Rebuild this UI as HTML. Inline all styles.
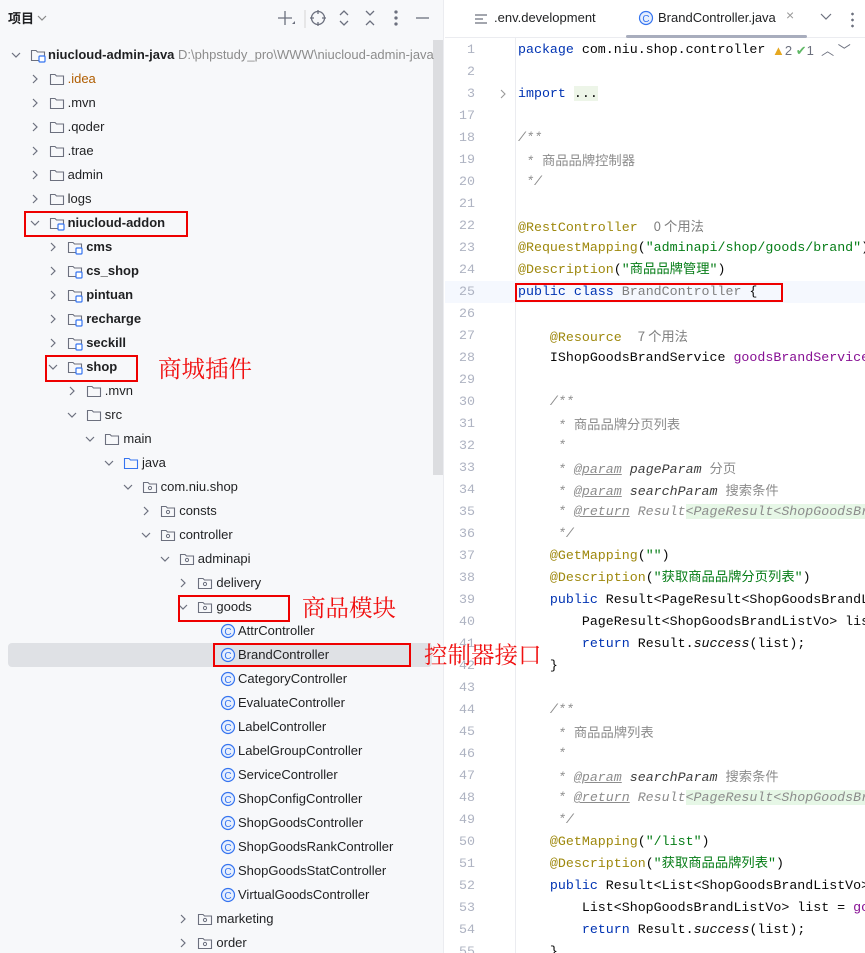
<!DOCTYPE html>
<html><head><meta charset="utf-8"><style>
*{margin:0;padding:0;box-sizing:border-box}
html,body{width:865px;height:953px;overflow:hidden}
body{background:#fff;font-family:"Liberation Sans","Noto Sans CJK SC",sans-serif;position:relative}
#tree{position:absolute;left:0;top:0;width:444px;height:953px;background:#f7f8fa;border-right:1px solid #ebecf0;overflow:hidden}
.r{position:absolute;height:24px;line-height:24px;font-size:13px;color:#1f2022;white-space:nowrap}
.ar{position:absolute;top:0;width:12px;height:24px}
.ic{position:absolute;top:4px;width:16px;height:16px}
.t{position:absolute;top:0}
.b{font-weight:bold}
.box{position:absolute;border:2.5px solid #e00;}
.ann{position:absolute;color:#f01010;font-size:23.5px;font-family:"Noto Serif CJK SC","Noto Sans CJK SC",serif;line-height:24px;z-index:10;white-space:nowrap}
#ed{position:absolute;left:445px;top:0;width:420px;height:953px;background:#fff;overflow:hidden}
.ln{position:absolute;left:0;width:30px;text-align:right;font-family:"Liberation Mono",monospace;font-size:13.3px;color:#aeb3c2}
.cd{position:absolute;left:73px;font-family:"Liberation Mono","Noto Sans CJK SC",monospace;font-size:13.3px;color:#080808;white-space:pre}
.k{color:#0033b3}.a{color:#9e880d}.s{color:#067d17}.c{color:#8c8c8c;font-style:italic}.g{color:#808080}.p{color:#871094}.tg{text-decoration:underline;color:#8c8c8c;font-style:italic}.cn{font-style:normal;font-family:"Noto Sans CJK SC",sans-serif}
</style></head><body>
<div id="tree">
<div style="position:absolute;left:8px;top:8px;font-size:13px;font-weight:bold;color:#1f2022;font-family:'Noto Sans CJK SC',sans-serif">项目</div>
<svg style="position:absolute;left:37px;top:14px" width="10" height="8"><path d="M1 2l4 4 4-4" fill="none" stroke="#888" stroke-width="1.2"/></svg>
<svg style="position:absolute;left:275px;top:8px" width="160" height="22" fill="none" stroke="#6c707e" stroke-width="1.3">
<path d="M4 3v14M-3 10h14" transform="translate(6 0)"/><path d="M17 16l3 0 0-3z" fill="#6c707e" stroke="none"/>
<line x1="30" y1="2" x2="30" y2="20" stroke="#ddd"/>
<circle cx="43" cy="10" r="6.5"/><path d="M43 2v4M43 14v4M35 10h4M47 10h4"/>
<path d="M65 7l4-4 4 4M65 13l4 4 4-4"/>
<path d="M91 3l4 4 4-4M91 17l4-4 4 4"/>
<circle cx="121" cy="4" r="1" fill="#6c707e"/><circle cx="121" cy="10" r="1" fill="#6c707e"/><circle cx="121" cy="16" r="1" fill="#6c707e"/>
<path d="M141 10h13"/>
</svg>
<div style="position:absolute;left:433px;top:40px;width:10px;height:435px;background:#dcdde0"></div>
<div style="position:absolute;left:8px;top:643px;width:424px;height:24px;background:#dfe1e5;border-radius:4px"></div>
<div id="rows"></div>
<div class="box" style="left:24px;top:211px;width:164px;height:26px"></div>
<div class="box" style="left:45px;top:355px;width:93px;height:27px"></div>
<div class="box" style="left:178px;top:595px;width:112px;height:27px"></div>
<div class="box" style="left:213px;top:643px;width:198px;height:24px"></div>
</div>

<div id="ed">
<div style="position:absolute;left:0;top:0;width:420px;height:38px;border-bottom:1px solid #ebecf0"></div>
<svg style="position:absolute;left:29px;top:12px" width="14" height="14" stroke="#6c707e" stroke-width="1.2"><path d="M1 3h12M1 7h8M1 11h12"/></svg>
<div style="position:absolute;left:49px;top:10px;font-size:13px;color:#1f2022">.env.development</div>
<svg style="position:absolute;left:193px;top:10px" width="16" height="16"><circle cx="8" cy="8" r="6.5" fill="#e7effd" stroke="#3574f0" stroke-width="1.2"/><text x="8" y="12" font-size="10" text-anchor="middle" fill="#3574f0" font-family="Liberation Sans">C</text></svg>
<div style="position:absolute;left:213px;top:10px;font-size:13px;color:#1f2022">BrandController.java</div>
<div style="position:absolute;left:341px;top:7px;font-size:14px;color:#999">×</div>
<svg style="position:absolute;left:375px;top:13px" width="12" height="8"><path d="M1 1l5 5 5-5" fill="none" stroke="#6c707e" stroke-width="1.2"/></svg>
<div style="position:absolute;left:406px;top:11px;width:3px;height:18px;background:radial-gradient(circle,#6c707e 1.2px,transparent 1.5px) 0 0/3px 6px"></div>
<div style="position:absolute;left:181px;top:35px;width:181px;height:3px;background:#a8adbd;border-radius:2px"></div>
<div style="position:absolute;left:70px;top:38px;width:1px;height:915px;background:#ebecf0"></div>
<div style="position:absolute;left:0;top:281px;width:420px;height:22px;background:#f5f8fe"></div>
<div id="code"></div>
<div style="position:absolute;left:327px;top:40px;font-size:13px;color:#6c707e;white-space:nowrap"><span style="color:#e6a820">▲</span>2 <span style="color:#5fb865">✔</span>1 &nbsp;︿ ﹀</div>
<div class="box" style="left:70px;top:283px;width:268px;height:19px"></div>
</div>

<div class="ann" style="left:158px;top:355px">商城插件</div>
<div class="ann" style="left:302px;top:594px">商品模块</div>
<div class="ann" style="left:424px;top:641px">控制器接口</div>

<script>
var folder='<path d="M1.5 3.5h4.5l1.5 1.5h7v8.5h-13z" fill="none" stroke="#6c707e" stroke-width="1.1"/>';
var mod=folder+'<rect x="9" y="9" width="6" height="6" rx="1" fill="#fff" stroke="#3574f0" stroke-width="1.2"/>';
var pkg=folder+'<circle cx="8" cy="9" r="1.6" fill="none" stroke="#6c707e" stroke-width="1"/>';
var src='<path d="M1.5 3.5h4.5l1.5 1.5h7v8.5h-13z" fill="none" stroke="#3574f0" stroke-width="1.1"/>';
var cls='<circle cx="8" cy="8" r="6.5" fill="#e7effd" stroke="#3574f0" stroke-width="1.2"/><text x="8" y="12" font-size="10" text-anchor="middle" fill="#3574f0" font-family="Liberation Sans">C</text>';
var R=[
[0,'o',mod,'niucloud-admin-java',1,' <span style="color:#8c8c8c;font-weight:normal">D:\\phpstudy_pro\\WWW\\niucloud-admin-java</span>'],
[1,'c',folder,'<span style="color:#b05d00">.idea</span>'],[1,'c',folder,'.mvn'],[1,'c',folder,'.qoder'],[1,'c',folder,'.trae'],[1,'c',folder,'admin'],[1,'c',folder,'logs'],
[1,'o',mod,'niucloud-addon',1],
[2,'c',mod,'cms',1],[2,'c',mod,'cs_shop',1],[2,'c',mod,'pintuan',1],[2,'c',mod,'recharge',1],[2,'c',mod,'seckill',1],[2,'o',mod,'shop',1],
[3,'c',folder,'.mvn'],[3,'o',folder,'src'],[4,'o',folder,'main'],[5,'o',src,'java'],[6,'o',pkg,'com.niu.shop'],[7,'c',pkg,'consts'],[7,'o',pkg,'controller'],[8,'o',pkg,'adminapi'],[9,'c',pkg,'delivery'],[9,'o',pkg,'goods'],
[10,'',cls,'AttrController'],[10,'',cls,'BrandController'],[10,'',cls,'CategoryController'],[10,'',cls,'EvaluateController'],[10,'',cls,'LabelController'],[10,'',cls,'LabelGroupController'],[10,'',cls,'ServiceController'],[10,'',cls,'ShopConfigController'],[10,'',cls,'ShopGoodsController'],[10,'',cls,'ShopGoodsRankController'],[10,'',cls,'ShopGoodsStatController'],[10,'',cls,'VirtualGoodsController'],
[9,'c',pkg,'marketing'],[9,'c',pkg,'order']];
var h='';
R.forEach(function(r,i){var y=43+i*24,ax=10+r[0]*18.6,ix,tx;
if(r[0]==10){ix=220;tx=238;}
else if(r[0]==0){ix=30;tx=48;}
else{ix=ax+20;tx=ix+19;}
h+='<div class="r" style="left:0;top:'+y+'px;width:444px">';
if(r[1])h+='<svg class="ar" style="left:'+ax+'px" viewBox="0 0 12 24"><path d="'+(r[1]=='o'?'M2 10l4 4 4-4':'M4 8l4 4-4 4')+'" fill="none" stroke="#6c707e" stroke-width="1.2"/></svg>';
h+='<svg class="ic" style="left:'+ix+'px" viewBox="0 0 16 16">'+r[2]+'</svg><span class="t'+(r[4]?' b':'')+'" style="left:'+tx+'px">'+r[3]+(r[5]||'')+'</span></div>';});
document.getElementById('rows').innerHTML=h;
var L=[[1,'<span class="k">package</span> com.niu.shop.controller'],[2,''],[3,'<span class="k">import</span> <span style="background:#edf5e8">...</span>'],[17,''],
[18,'<span class="c">/**</span>'],[19,'<span class="c"> * <span class="cn">商品品牌控制器</span></span>'],[20,'<span class="c"> */</span>'],[21,''],
[22,'<span class="a">@RestController</span>  <span class="g" style="font-family:Noto Sans CJK SC">0 个用法</span>'],
[23,'<span class="a">@RequestMapping</span>(<span class="s">"adminapi/shop/goods/brand"</span>)'],
[24,'<span class="a">@Description</span>(<span class="s">"商品品牌管理"</span>)'],
[25,'<span class="k">public class</span> <span class="g">BrandController</span> {'],[26,''],
[27,'    <span class="a">@Resource</span>  <span class="g" style="font-family:Noto Sans CJK SC">7 个用法</span>'],
[28,'    IShopGoodsBrandService <span class="p">goodsBrandService</span>;'],[29,''],
[30,'    <span class="c">/**</span>'],[31,'<span class="c">     * <span class="cn">商品品牌分页列表</span></span>'],[32,'<span class="c">     *</span>'],
[33,'<span class="c">     * <span class="tg">@param</span> <span style="color:#3d3d3d">pageParam</span> <span class="cn">分页</span></span>'],
[34,'<span class="c">     * <span class="tg">@param</span> <span style="color:#3d3d3d">searchParam</span> <span class="cn">搜索条件</span></span>'],
[35,'<span class="c">     * <span class="tg">@return</span> Result<span style="background:#e6f7e6">&lt;PageResult&lt;ShopGoodsBrandListVo&gt;&gt;</span></span>'],
[36,'<span class="c">     */</span>'],
[37,'    <span class="a">@GetMapping</span>(<span class="s">""</span>)'],
[38,'    <span class="a">@Description</span>(<span class="s">"获取商品品牌分页列表"</span>)'],
[39,'    <span class="k">public</span> Result&lt;PageResult&lt;ShopGoodsBrandListVo&gt;&gt;'],
[40,'        PageResult&lt;ShopGoodsBrandListVo&gt; list = '],
[41,'        <span class="k">return</span> Result.<i>success</i>(list);'],[42,'    }'],[43,''],
[44,'    <span class="c">/**</span>'],[45,'<span class="c">     * <span class="cn">商品品牌列表</span></span>'],[46,'<span class="c">     *</span>'],
[47,'<span class="c">     * <span class="tg">@param</span> <span style="color:#3d3d3d">searchParam</span> <span class="cn">搜索条件</span></span>'],
[48,'<span class="c">     * <span class="tg">@return</span> Result<span style="background:#e6f7e6">&lt;PageResult&lt;ShopGoodsBrandListVo&gt;&gt;</span></span>'],
[49,'<span class="c">     */</span>'],
[50,'    <span class="a">@GetMapping</span>(<span class="s">"/list"</span>)'],
[51,'    <span class="a">@Description</span>(<span class="s">"获取商品品牌列表"</span>)'],
[52,'    <span class="k">public</span> Result&lt;List&lt;ShopGoodsBrandListVo&gt;&gt;'],
[53,'        List&lt;ShopGoodsBrandListVo&gt; list = <span class="p">goodsBrandService</span>'],
[54,'        <span class="k">return</span> Result.<i>success</i>(list);'],[55,'    }']];
var c='';
L.forEach(function(l,i){var y=39+i*22;c+='<div class="ln" style="top:'+y+'px;line-height:22px">'+l[0]+'</div><div class="cd" style="top:'+y+'px;line-height:22px">'+l[1]+'</div>';});
c+='<svg style="position:absolute;left:53px;top:87px" width="10" height="14"><path d="M3 3l4 4-4 4" fill="none" stroke="#999" stroke-width="1.1"/></svg>';
document.getElementById('code').innerHTML=c;
</script>
</body></html>
